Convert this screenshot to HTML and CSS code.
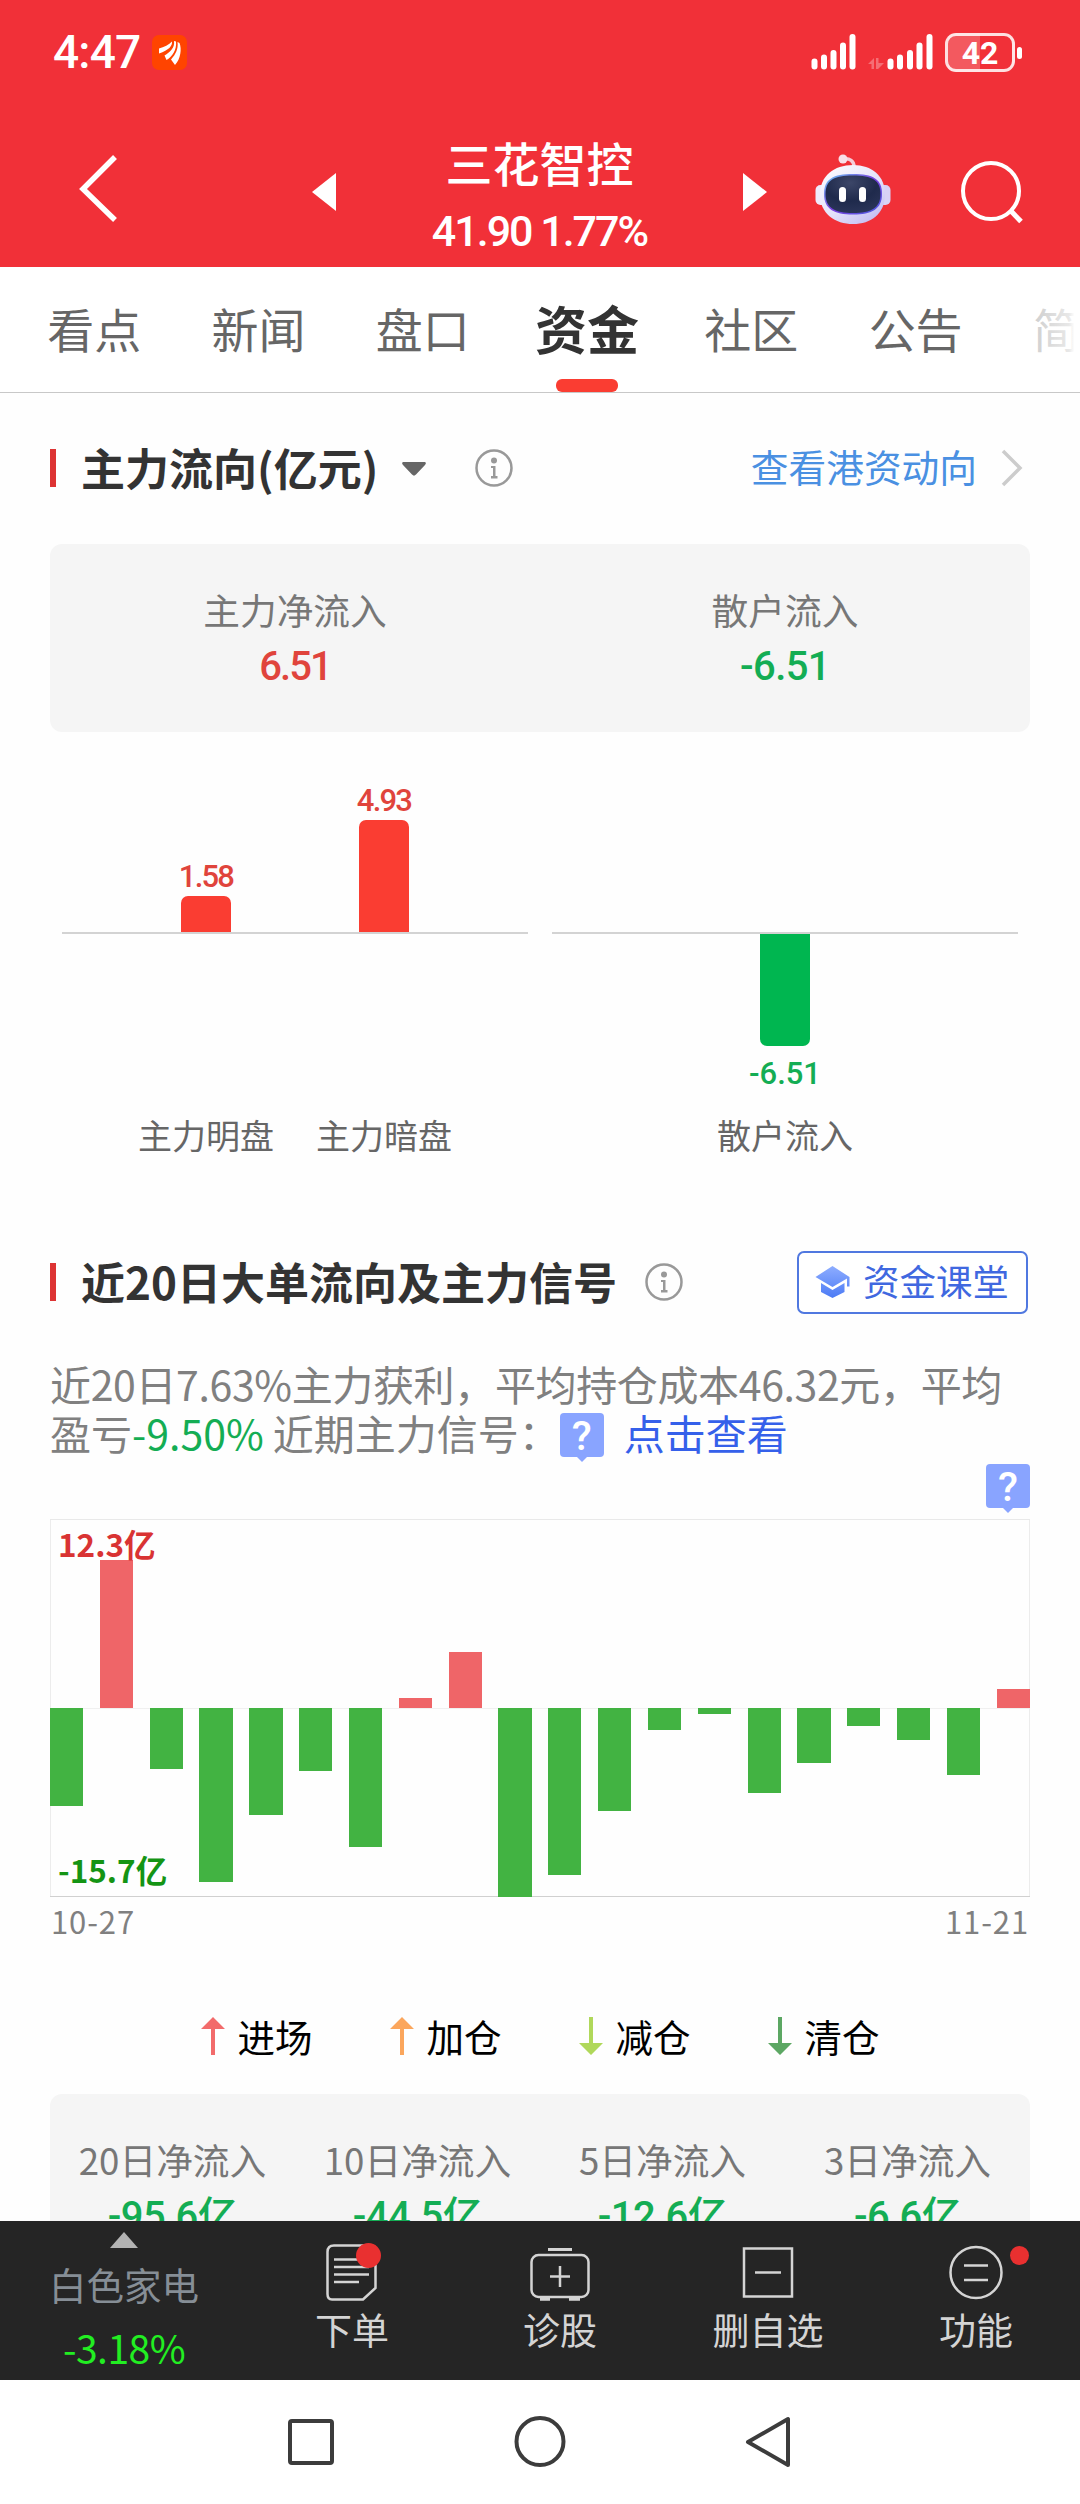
FILE: index.html
```html
<!DOCTYPE html>
<html lang="zh-CN">
<head>
  <meta charset="utf-8">
  <title>三花智控 - 资金</title>
  <link rel="stylesheet" href="styles.css">
</head>
<body>
  <header class="header">
    <div class="status-bar">
      <span class="time">4:47</span>
      <svg class="app-badge" width="35" height="35" viewBox="0 0 35 35">
        <rect width="35" height="35" rx="7" fill="#ff4400"/>
        <path d="M7 13.500C12 12 17 10 20 6.500C20.500 11 17 15 7 18.500Z" fill="#fff"/>
        <path d="M22 6C23 13 18 17 12.500 20.500L14.500 25C20 22 25 15 24 6.500Z" fill="#fff"/>
        <path d="M25.500 7C26.500 14 23.500 19.500 19 24.500L23 30C28.500 24 30 14 27.500 8Z" fill="#fff"/>
      </svg>
      <div class="status-icons">
        <svg width="46" height="36" viewBox="0 0 46 36" fill="#fff">
          <rect x="0.500" y="24.500" width="6" height="11" rx="3"/>
          <rect x="10" y="20.500" width="6" height="15" rx="3"/>
          <rect x="19.500" y="16" width="6" height="19.500" rx="3"/>
          <rect x="29" y="8.500" width="6" height="27" rx="3"/>
          <rect x="38.500" y="0" width="6" height="35.500" rx="3"/>
        </svg>
        <svg class="signal-data" width="66" height="36" viewBox="0 0 66 36" fill="#fff">
          <path d="M0 30L6 24V35H3.500V30ZM8 24H10.500V29H16L10 35H8Z" opacity="0.300"/>
          <rect x="19.500" y="24.500" width="6" height="11" rx="3"/>
          <rect x="29" y="20.500" width="6" height="15" rx="3"/>
          <rect x="39" y="16" width="6" height="19.500" rx="3"/>
          <rect x="48.500" y="8.500" width="6" height="27" rx="3"/>
          <rect x="58.500" y="0" width="6" height="35.500" rx="3"/>
        </svg>
        <div class="battery">42</div>
      </div>
    </div>

    <div class="title-bar">
      <svg class="back" width="40" height="70" viewBox="0 0 40 70" fill="none" stroke="#fff" stroke-width="5.500">
        <path d="M36 4L4 36L36 67"/>
      </svg>
      <svg class="prev" width="24" height="38" viewBox="0 0 24 38"><path d="M24 0V38L0 19Z" fill="#fff"/></svg>
      <div class="stock">
        <h1>三花智控</h1>
        <p>41.90 1.77%</p>
      </div>
      <svg class="next" width="24" height="38" viewBox="0 0 24 38"><path d="M0 0V38L24 19Z" fill="#fff"/></svg>
      <svg class="robot" width="76" height="72" viewBox="0 0 76 72">
        <defs>
          <linearGradient id="shell" x1="0" y1="0" x2="0.800" y2="1">
            <stop offset="0" stop-color="#fff"/>
            <stop offset="0.600" stop-color="#e4e2fa"/>
            <stop offset="1" stop-color="#c3bdf2"/>
          </linearGradient>
          <linearGradient id="visor" x1="0" y1="0" x2="1" y2="1">
            <stop offset="0" stop-color="#6ac8f0"/>
            <stop offset="0.500" stop-color="#7a3fe0"/>
            <stop offset="1" stop-color="#4a5de0"/>
          </linearGradient>
          <radialGradient id="glass" cx="0.450" cy="0.200" r="0.800">
            <stop offset="0" stop-color="#3c4668"/>
            <stop offset="0.600" stop-color="#1f2a4c"/>
            <stop offset="1" stop-color="#2a3458"/>
          </radialGradient>
        </defs>
        <path d="M28 5C35 4 39 7 39 13" fill="none" stroke="#f5ccd8" stroke-width="3.500"/>
        <circle cx="28" cy="5" r="4.500" fill="#f8dfe8"/>
        <rect x="0.500" y="31" width="12" height="20" rx="5" fill="#eeeafc"/>
        <rect x="63.500" y="31" width="12" height="20" rx="5" fill="#d8d2f6"/>
        <path d="M38 11C57 11 70 22 70 40C70 60 56 70 38 70C20 70 5 60 5 40C5 22 19 11 38 11Z" fill="url(#shell)"/>
        <path d="M38 20C58 20 67 25 67 40C67 55 57 60.500 38 60.500C19 60.500 9 55 9 40C9 25 18 20 38 20Z" fill="url(#visor)"/>
        <path d="M38 21.500C57 21.500 65.500 26 65.500 40C65.500 54 56 59 38 59C20 59 10.500 54 10.500 40C10.500 26 19 21.500 38 21.500Z" fill="url(#glass)"/>
        <rect x="24" y="33" width="7" height="15" rx="3.500" fill="#fff"/>
        <rect x="44" y="33" width="7" height="15" rx="3.500" fill="#fff"/>
      </svg>
      <svg class="search" width="64" height="64" viewBox="0 0 64 64" fill="none" stroke="#fff" stroke-width="4">
        <circle cx="31" cy="31" r="28"/>
        <path d="M50 50L61 61.500" stroke-width="5"/>
      </svg>
    </div>
  </header>

  <nav class="tabs">
    <a class="tab">看点</a>
    <a class="tab">新闻</a>
    <a class="tab">盘口</a>
    <a class="tab active">资金</a>
    <a class="tab">社区</a>
    <a class="tab">公告</a>
    <a class="tab">简况</a>
  </nav>

  <main class="content">
    <section class="flow">
      <div class="section-head">
        <h2>主力流向(亿元)</h2>
        <svg class="caret" width="24" height="14" viewBox="0 0 24 14"><path d="M2 0H22C24 0 24.500 1.500 23 3L14 12.500C12.500 14 11.500 14 10 12.500L1 3C-0.500 1.500 0 0 2 0Z" fill="#666"/></svg>
        <svg class="info" width="38" height="38" viewBox="0 0 38 38">
          <circle cx="19" cy="19" r="17.500" fill="none" stroke="#999" stroke-width="2.500"/>
          <circle cx="19" cy="11.500" r="3" fill="#999"/>
          <path d="M16 17H20.500V27H22.500V29.500H16V27H18V19H16Z" fill="#999"/>
        </svg>
        <a class="more">
          <span>查看港资动向</span>
          <svg width="22" height="38" viewBox="0 0 22 38" fill="none" stroke="#ccc" stroke-width="3.500"><path d="M2 2L19 19L2 36"/></svg>
        </a>
      </div>

      <div class="card">
        <div class="cell">
          <span class="label">主力净流入</span>
          <span class="value up">6.51</span>
        </div>
        <div class="cell">
          <span class="label">散户流入</span>
          <span class="value down">-6.51</span>
        </div>
      </div>

      <div class="bar-charts">
        <div class="bar-chart">
          <div class="plus">
            <div class="bar-col"><span class="up">1.58</span><i class="bar bar-up" style="height: 36px"></i></div>
            <div class="bar-col"><span class="up">4.93</span><i class="bar bar-up" style="height: 112px"></i></div>
          </div>
          <div class="minus"></div>
          <div class="names"><span>主力明盘</span><span>主力暗盘</span></div>
        </div>
        <div class="bar-chart">
          <div class="plus"></div>
          <div class="minus">
            <div class="bar-col"><i class="bar bar-down" style="height: 112px"></i><span class="down">-6.51</span></div>
          </div>
          <div class="names"><span>散户流入</span></div>
        </div>
      </div>
    </section>

    <section class="signal">
      <div class="section-head">
        <h2>近20日大单流向及主力信号</h2>
        <svg class="info" width="38" height="38" viewBox="0 0 38 38">
          <circle cx="19" cy="19" r="17.500" fill="none" stroke="#999" stroke-width="2.500"/>
          <circle cx="19" cy="11.500" r="3" fill="#999"/>
          <path d="M16 17H20.500V27H22.500V29.500H16V27H18V19H16Z" fill="#999"/>
        </svg>
        <a class="course">
          <svg width="36" height="34" viewBox="0 0 36 34">
            <defs>
              <linearGradient id="cap" x1="0" y1="0" x2="0" y2="1">
                <stop offset="0" stop-color="#8eadff"/>
                <stop offset="1" stop-color="#4c7bf5"/>
              </linearGradient>
            </defs>
            <path d="M17.500 1L34.500 12V21.500H32V13.500L17.500 22L0.500 12ZM6 18L17.500 25L29.500 18V27L17.500 33L6 27Z" fill="url(#cap)"/>
          </svg>
          <span>资金课堂</span>
        </a>
      </div>

      <p class="summary"><span class="cost">近20日7.63%主力获利，平均持仓成本46.32元，平均</span><br>盈亏<span class="down">-9.50%</span> 近期主力信号：<span class="help">?</span><a>点击查看</a></p>
      <div class="help-row"><span class="help">?</span></div>

      <div class="history">
        <span class="max">12.3亿</span>
        <span class="min">-15.7亿</span>
        <div class="day"><i class="neg" style="height: 98px"></i></div>
        <div class="day"><i class="pos" style="height: 148px"></i></div>
        <div class="day"><i class="neg" style="height: 61px"></i></div>
        <div class="day"><i class="neg" style="height: 174px"></i></div>
        <div class="day"><i class="neg" style="height: 107px"></i></div>
        <div class="day"><i class="neg" style="height: 63px"></i></div>
        <div class="day"><i class="neg" style="height: 139px"></i></div>
        <div class="day"><i class="pos" style="height: 10px"></i></div>
        <div class="day"><i class="pos" style="height: 56px"></i></div>
        <div class="day"><i class="neg" style="height: 189px"></i></div>
        <div class="day"><i class="neg" style="height: 167px"></i></div>
        <div class="day"><i class="neg" style="height: 103px"></i></div>
        <div class="day"><i class="neg" style="height: 22px"></i></div>
        <div class="day"><i class="neg" style="height: 6px"></i></div>
        <div class="day"><i class="neg" style="height: 85px"></i></div>
        <div class="day"><i class="neg" style="height: 55px"></i></div>
        <div class="day"><i class="neg" style="height: 18px"></i></div>
        <div class="day"><i class="neg" style="height: 32px"></i></div>
        <div class="day"><i class="neg" style="height: 67px"></i></div>
        <div class="day"><i class="pos" style="height: 19px"></i></div>
      </div>
      <div class="dates"><span>10-27</span><span>11-21</span></div>

      <div class="legend">
        <span><svg width="24" height="38" viewBox="0 0 24 38" fill="#f26b6b"><path d="M12 0L24 12H14V38H10V12H0Z"/></svg>进场</span>
        <span><svg width="24" height="38" viewBox="0 0 24 38" fill="#fba65c"><path d="M12 0L24 12H14V38H10V12H0Z"/></svg>加仓</span>
        <span><svg width="24" height="38" viewBox="0 0 24 38" fill="#b0d85a"><path d="M12 38L24 26H14V0H10V26H0Z"/></svg>减仓</span>
        <span><svg width="24" height="38" viewBox="0 0 24 38" fill="#5ca763"><path d="M12 38L24 26H14V0H10V26H0Z"/></svg>清仓</span>
      </div>

      <div class="card">
        <div class="cell"><span class="label">20日净流入</span><span class="value down">-95.6亿</span></div>
        <div class="cell"><span class="label">10日净流入</span><span class="value down">-44.5亿</span></div>
        <div class="cell"><span class="label">5日净流入</span><span class="value down">-12.6亿</span></div>
        <div class="cell"><span class="label">3日净流入</span><span class="value down">-6.6亿</span></div>
      </div>
    </section>
  </main>

  <footer class="toolbar">
    <div class="sector">
      <svg width="28" height="16" viewBox="0 0 28 16"><path d="M14 0L28 16H0Z" fill="#b3b3b3"/></svg>
      <span>白色家电</span>
      <b>-3.18%</b>
    </div>
    <a class="tool">
      <svg width="60" height="58" viewBox="0 0 60 58" fill="none" stroke="#d4d4d4" stroke-width="2.500">
        <path d="M12 2.500H48Q53 2.500 53.500 7V45L41 56.500H10Q5.500 56.500 5.500 51V9Q5.500 2.500 12 2.500Z"/>
        <path d="M12 16.500H47M12 24H47M12 31.500H47M12 39H37"/>
        <circle cx="46.500" cy="12.500" r="12.500" fill="#e93030" stroke="none"/>
      </svg>
      下单
    </a>
    <a class="tool">
      <svg width="60" height="58" viewBox="0 0 60 58" fill="none" stroke="#d4d4d4" stroke-width="2.500">
        <path d="M18 6.500H42" stroke-width="3"/>
        <rect x="1.500" y="12" width="57" height="42" rx="7"/>
        <path d="M30 23V44M20 33.500H40"/>
        <path d="M10 56H20M39 56H50" stroke-width="3.500"/>
      </svg>
      诊股
    </a>
    <a class="tool">
      <svg width="60" height="58" viewBox="0 0 60 58" fill="none" stroke="#d4d4d4" stroke-width="2.500">
        <rect x="6" y="5.500" width="48" height="48"/>
        <path d="M17 29.500H43"/>
      </svg>
      删自选
    </a>
    <a class="tool has-dot">
      <svg width="60" height="58" viewBox="0 0 60 58" fill="none" stroke="#d4d4d4" stroke-width="2.500">
        <circle cx="30" cy="29.500" r="25.500"/>
        <path d="M18 22.500H42M18 37H42"/>
      </svg>
      功能
    </a>
  </footer>

  <div class="nav-bar">
    <svg width="52" height="54" viewBox="0 0 52 54" fill="none" stroke="#3c3c3c" stroke-width="4"><rect x="5" y="6" width="42" height="42" rx="2"/></svg>
    <svg width="52" height="54" viewBox="0 0 52 54" fill="none" stroke="#3c3c3c" stroke-width="4"><circle cx="26" cy="26.500" r="23.500"/></svg>
    <svg width="52" height="54" viewBox="0 0 52 54" fill="none" stroke="#3c3c3c" stroke-width="4" stroke-linejoin="round"><path d="M45 4V50L5 27Z"/></svg>
  </div>
</body>
</html>
```

FILE: styles.css
```css
* {
  margin: 0;
  padding: 0;
  box-sizing: border-box;
}

body {
  width: 1080px;
  height: 2504px;
  display: flex;
  flex-direction: column;
  font-family: "Noto Sans CJK SC", sans-serif;
  background: #fefefe;
  color: #333;
  overflow: hidden;
}

svg {
  display: block;
  flex: none;
}

.up {
  color: #e0443c;
}

.down {
  color: #14ad54;
}

/* header */
.header {
  height: 267px;
  background: #f13038;
  color: #fff;
}

.status-bar {
  display: flex;
  align-items: center;
  height: 104px;
  padding: 0 65px 0 53px;
}

.time {
  width: 99px;
  font: 500 46px/54px Roboto, sans-serif;
  letter-spacing: -0.800px;
}

.status-icons {
  display: flex;
  align-items: center;
  margin-left: auto;
}

.signal-data {
  margin: 0 11px 0 11px;
}

.battery {
  position: relative;
  width: 70px;
  height: 39px;
  border: 3px solid rgba(255, 255, 255, 0.85);
  border-radius: 11px;
  background: linear-gradient(90deg, rgba(255, 255, 255, 0.2) 50%, transparent 50%);
  font: 700 32px/34px Roboto, sans-serif;
  text-align: center;
}

.battery::after {
  content: "";
  position: absolute;
  right: -10px;
  top: 11px;
  width: 5px;
  height: 12px;
  border-radius: 3px;
  background: #fff;
}

.title-bar {
  display: flex;
  align-items: flex-start;
  padding-left: 79px;
}

.back {
  margin-top: 49px;
}

.prev {
  margin: 69px 0 0 193px;
}

.stock {
  width: 407px;
  padding-top: 23px;
  text-align: center;
}

.stock h1 {
  font-size: 47px;
  font-weight: 500;
  line-height: 70px;
}

.stock p {
  padding-top: 4px;
  font: 500 43px/60px Roboto, sans-serif;
  letter-spacing: -2px;
}

.next {
  margin-top: 69px;
}

.robot {
  margin: 50px 0 0 48px;
}

.search {
  margin: 56px 0 0 69px;
}

/* tabs */
.tabs {
  position: relative;
  display: flex;
  flex: none;
  height: 126px;
  padding-left: 12px;
  border-bottom: 1px solid #c8c8c8;
  background: #fff;
  overflow: hidden;
}

.tabs::after {
  content: "";
  position: absolute;
  right: 0;
  top: 0;
  width: 110px;
  height: 125px;
  background: linear-gradient(90deg, rgba(255, 255, 255, 0.4), rgba(255, 255, 255, 0.85) 90%, #fff 95%);
}

.tab {
  flex: none;
  display: flex;
  flex-direction: column;
  align-items: center;
  width: 164.300px;
  font-size: 47px;
  line-height: 121px;
  color: #666;
}

.tab.active {
  font-size: 52px;
  font-weight: 700;
  color: #333;
}

.tab.active::after {
  content: "";
  width: 62px;
  height: 13px;
  margin-top: -9px;
  border-radius: 6px;
  background: #fa3d32;
}

/* content */
.content {
  flex: 1;
  min-height: 0;
  padding: 0 50px;
  overflow: hidden;
}

.section-head {
  display: flex;
  align-items: center;
  height: 64px;
}

.section-head::before {
  content: "";
  width: 6px;
  height: 38px;
  margin-right: 25px;
  background: #dd3333;
}

.section-head h2 {
  padding-bottom: 2px;
  font-size: 44px;
  font-weight: 700;
  line-height: 60px;
  white-space: nowrap;
}

.flow .section-head {
  margin-top: 43px;
}

.caret {
  margin: 2px 49px 0 24px;
}

.signal .info {
  margin-left: 28px;
}

.more {
  display: flex;
  align-items: center;
  gap: 24px;
  margin-left: auto;
  padding-right: 7px;
  font-size: 37.700px;
  line-height: 56px;
  color: #4a90e2;
}

.more span,
.course span {
  padding-bottom: 4px;
}

.card {
  display: flex;
  height: 188px;
  border-radius: 12px;
  background: #f5f5f5;
}

.flow .card {
  margin-top: 44px;
}

.cell {
  flex: 1;
  display: flex;
  flex-direction: column;
  align-items: center;
  padding-top: 37px;
}

.label {
  font-size: 36.700px;
  line-height: 56px;
  color: #777;
}

.value {
  padding-top: 3px;
  font: 500 40px/54px Roboto, "Noto Sans CJK SC", sans-serif;
  letter-spacing: -2px;
}

.value.down {
  letter-spacing: -0.600px;
}

.bar-charts {
  display: flex;
  gap: 24px;
  padding: 0 12px;
}

.bar-chart {
  flex: 1;
}

.plus,
.minus,
.names {
  display: flex;
  justify-content: center;
}

.plus {
  height: 202px;
  align-items: flex-end;
  border-bottom: 2px solid #d3d3d3;
}

.minus {
  height: 184px;
}

.bar-col {
  display: flex;
  flex-direction: column;
  align-items: center;
  width: 178px;
  font: 500 31px/38px Roboto, sans-serif;
  letter-spacing: -1.800px;
}

.bar-col .down {
  letter-spacing: 0;
}

.bar {
  width: 50px;
}

.bar-up {
  background: #fa3d32;
  border-radius: 7px 7px 0 0;
}

.bar-down {
  margin-bottom: 9px;
  background: #00b650;
  border-radius: 0 0 7px 7px;
}

.names span {
  width: 178px;
  font-size: 34px;
  line-height: 34px;
  color: #666;
  text-align: center;
}

.signal {
  margin-top: 98px;
}

.course {
  display: flex;
  align-items: center;
  gap: 14px;
  width: 231px;
  height: 63px;
  margin: 0 2px 0 auto;
  padding-left: 16px;
  border: 2px solid #5078e0;
  border-radius: 7px;
  background: #fff;
  font-size: 36.500px;
  line-height: 55px;
  color: #4068e0;
  white-space: nowrap;
}

.course svg {
  margin-right: -2px;
}

.summary {
  margin-top: 45px;
  font-size: 41px;
  line-height: 49px;
  color: #808080;
  white-space: nowrap;
}

.cost {
  letter-spacing: -0.360px;
}

.summary a {
  color: #3560ea;
}

.help {
  position: relative;
  display: inline-block;
  width: 44px;
  height: 44px;
  border-radius: 4px;
  background: #89a4ff;
  color: #fff;
  font: 500 41px/46px Roboto, sans-serif;
  text-align: center;
}

.help::after {
  content: "";
  position: absolute;
  left: 16px;
  top: 43px;
  border: 6px solid transparent;
  border-top-color: #89a4ff;
  border-bottom: 0;
}

.summary .help {
  margin-right: 20px;
}

.help-row {
  display: flex;
  justify-content: flex-end;
  height: 62px;
  padding-top: 7px;
}

.history {
  position: relative;
  display: flex;
  justify-content: space-between;
  height: 378px;
  border-top: 1px solid #e9e9e9;
  border-bottom: 1px solid #d0d0d0;
  box-shadow: inset 1px 0 #ececec, inset -1px 0 #ececec;
  background: linear-gradient(#f0f0f0, #f0f0f0) 0 188px / 100% 1px no-repeat;
}

.day {
  display: flex;
  flex-direction: column;
  width: 33.200px;
  height: 377px;
}

.day i {
  display: block;
}

.pos {
  margin-top: auto;
  margin-bottom: 189px;
  background: #ef6568;
}

.neg {
  margin-top: 188px;
  background: #42b342;
}

.max,
.min {
  position: absolute;
  left: 8px;
  font-size: 31.500px;
  font-weight: 700;
  line-height: 36px;
}

.max {
  top: 5px;
  color: #d93333;
}

.min {
  bottom: 9px;
  color: #149414;
}

.dates {
  display: flex;
  justify-content: space-between;
  padding: 1px 1px 0;
  font-size: 31px;
  line-height: 46px;
  letter-spacing: 0.900px;
  color: #808080;
}

.legend {
  display: flex;
  justify-content: center;
  gap: 77px;
  margin-top: 64px;
  font-size: 37.500px;
  line-height: 56px;
  color: #000;
}

.legend span {
  display: flex;
  align-items: center;
  gap: 13px;
}

.signal .card {
  margin-top: 30px;
}

/* bottom toolbar */
.toolbar {
  display: flex;
  flex: none;
  height: 159px;
  background: #252525;
}

.sector {
  display: flex;
  flex-direction: column;
  align-items: center;
  width: 248px;
  padding-top: 11px;
}

.sector span {
  margin-top: 9px;
  font-size: 37.500px;
  line-height: 54px;
  color: #868e96;
}

.sector b {
  margin-top: 9px;
  font-size: 39px;
  font-weight: 400;
  line-height: 54px;
  letter-spacing: -0.500px;
  color: #22ee22;
}

.tool {
  position: relative;
  display: flex;
  flex: 1;
  flex-direction: column;
  align-items: center;
  padding-top: 22px;
  font-size: 37px;
  line-height: 56px;
  color: #d4d4d4;
}

.has-dot::after {
  content: "";
  position: absolute;
  left: 138px;
  top: 25px;
  width: 19px;
  height: 19px;
  border-radius: 50%;
  background: #e93030;
}

/* system navigation */
.nav-bar {
  display: flex;
  flex: none;
  justify-content: center;
  gap: 177px;
  height: 124px;
  padding-top: 35px;
  background: #fff;
}
```
